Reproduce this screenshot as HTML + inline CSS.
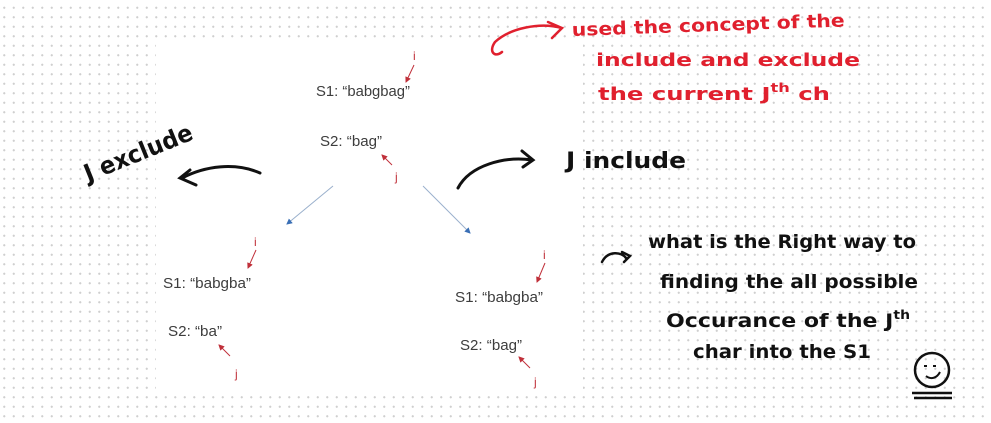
<!DOCTYPE html>
<html><head><style>
html,body{margin:0;padding:0;}
body{width:991px;height:423px;overflow:hidden;background-color:#fff;
background-image:radial-gradient(circle,#cfcfcf 0.9px,transparent 1.3px);
background-size:9.5px 9.5px;background-position:-0.5px 3px;position:relative;}
.box{position:absolute;left:156px;top:38px;width:427px;height:356px;background:#fff;}
svg{position:absolute;left:0;top:0;}
.d{font-family:"Liberation Sans Narrow","Liberation Sans",sans-serif;font-size:15px;fill:#3d3d3d;}
.r{font-family:"Liberation Sans",sans-serif;font-size:12px;fill:#c0303a;}
.h{font-family:"DejaVu Sans",sans-serif;font-weight:bold;fill:#111;}
.hr{font-family:"DejaVu Sans",sans-serif;font-weight:bold;fill:#e0202e;}
</style></head><body>
<div class="box"></div>
<svg width="991" height="423" viewBox="0 0 991 423">
<defs>
<marker id="ra" markerWidth="6" markerHeight="6" refX="5" refY="3" orient="auto"><path d="M0,0 L6,3 L0,6z" fill="#c0303a"/></marker>
<marker id="ba" markerWidth="6" markerHeight="6" refX="5" refY="3" orient="auto"><path d="M0,0 L6,3 L0,6z" fill="#3a6fb5"/></marker>
</defs>
<text class="d" x="316" y="96" textLength="94" lengthAdjust="spacingAndGlyphs">S1: “babgbag”</text>
<text class="d" x="320" y="146" textLength="62" lengthAdjust="spacingAndGlyphs">S2: “bag”</text>
<text class="r" x="413" y="60">i</text>
<line x1="414" y1="65" x2="406" y2="82" stroke="#c0303a" stroke-width="1" marker-end="url(#ra)"/>
<text class="r" x="395" y="181">j</text>
<line x1="392" y1="165" x2="382" y2="155" stroke="#c0303a" stroke-width="1" marker-end="url(#ra)"/>
<line x1="333" y1="186" x2="287" y2="224" stroke="#9ab0cc" stroke-width="1" marker-end="url(#ba)"/>
<line x1="423" y1="186" x2="470" y2="233" stroke="#9ab0cc" stroke-width="1" marker-end="url(#ba)"/>
<text class="d" x="163" y="288" textLength="88" lengthAdjust="spacingAndGlyphs">S1: “babgba”</text>
<text class="d" x="168" y="336" textLength="54" lengthAdjust="spacingAndGlyphs">S2: “ba”</text>
<text class="r" x="254" y="246">i</text>
<line x1="256" y1="250" x2="248" y2="268" stroke="#c0303a" stroke-width="1" marker-end="url(#ra)"/>
<text class="r" x="235" y="378">j</text>
<line x1="230" y1="356" x2="219" y2="345" stroke="#c0303a" stroke-width="1" marker-end="url(#ra)"/>
<text class="d" x="455" y="302" textLength="88" lengthAdjust="spacingAndGlyphs">S1: “babgba”</text>
<text class="d" x="460" y="350" textLength="62" lengthAdjust="spacingAndGlyphs">S2: “bag”</text>
<text class="r" x="543" y="259">i</text>
<line x1="545" y1="263" x2="537" y2="282" stroke="#c0303a" stroke-width="1" marker-end="url(#ra)"/>
<text class="r" x="534" y="386">j</text>
<line x1="530" y1="368" x2="519" y2="357" stroke="#c0303a" stroke-width="1" marker-end="url(#ra)"/>

<path d="M562,28 C540,22 510,28 495,42 C488,52 495,58 502,52 M548,22 L562,28 L552,38" fill="none" stroke="#e0202e" stroke-width="2.5" stroke-linecap="round"/>
<text class="hr" x="572" y="36" font-size="18" textLength="273" lengthAdjust="spacingAndGlyphs" transform="rotate(-2 572 36)">used the concept of the</text>
<text class="hr" x="596" y="66" font-size="18" textLength="264" lengthAdjust="spacingAndGlyphs">include and exclude</text>
<text class="hr" x="598" y="100" font-size="18" textLength="232" lengthAdjust="spacingAndGlyphs">the current J<tspan font-size="12" dy="-8">th</tspan><tspan dy="8"> ch</tspan></text>

<text class="h" x="88" y="182" font-size="24" textLength="115" lengthAdjust="spacingAndGlyphs" transform="rotate(-22 88 182)">J exclude</text>
<path d="M260,173 C235,162 205,166 182,178 M190,170 L180,178 L196,185" fill="none" stroke="#111" stroke-width="3" stroke-linecap="round"/>
<path d="M458,188 C470,165 505,156 532,160 M522,151 L533,160 L523,167" fill="none" stroke="#111" stroke-width="3" stroke-linecap="round"/>
<text class="h" x="566" y="168" font-size="22" textLength="120" lengthAdjust="spacingAndGlyphs">J include</text>

<path d="M602,262 C608,250 622,252 626,258 M622,252 L630,256 L624,262" fill="none" stroke="#111" stroke-width="2.5" stroke-linecap="round"/>
<text class="h" x="648" y="248" font-size="19" textLength="268" lengthAdjust="spacingAndGlyphs">what is the Right way to</text>
<text class="h" x="660" y="288" font-size="19" textLength="258" lengthAdjust="spacingAndGlyphs">finding the all possible</text>
<text class="h" x="666" y="327" font-size="19" textLength="244" lengthAdjust="spacingAndGlyphs">Occurance of the J<tspan font-size="12" dy="-8">th</tspan></text>
<text class="h" x="693" y="358" font-size="19" textLength="178" lengthAdjust="spacingAndGlyphs">char into the S1</text>
<circle cx="932" cy="370" r="17" fill="none" stroke="#111" stroke-width="2.5"/>
<path d="M924,366 h3 M933,366 h3 M926,376 C931,380 937,378 940,372" fill="none" stroke="#111" stroke-width="2"/>
<path d="M912,393 h40 M914,398 h38" stroke="#111" stroke-width="2.5"/>
</svg>
</body></html>
